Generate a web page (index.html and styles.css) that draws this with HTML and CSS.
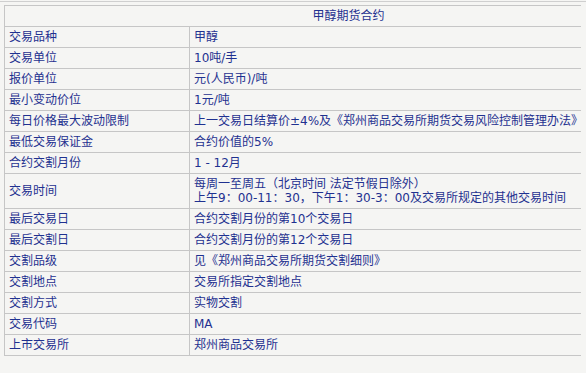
FILE: index.html
```html
<!DOCTYPE html>
<html lang="zh-CN">
<head>
<meta charset="utf-8">
<link rel="stylesheet" href="styles.css">
</head>
<body>
<div class="frame">
  <div class="clip">
    <table class="spec">
      <colgroup><col class="c1"><col class="c2"></colgroup>
      <tr class="head"><td colspan="2">甲醇期货合约</td></tr>
      <tr><td>交易品种</td><td>甲醇</td></tr>
      <tr><td>交易单位</td><td>10吨/手</td></tr>
      <tr><td>报价单位</td><td>元(人民币)/吨</td></tr>
      <tr><td>最小变动价位</td><td>1元/吨</td></tr>
      <tr><td>每日价格最大波动限制</td><td>上一交易日结算价±4%及《郑州商品交易所期货交易风险控制管理办法》相关规定</td></tr>
      <tr><td>最低交易保证金</td><td>合约价值的5%</td></tr>
      <tr><td>合约交割月份</td><td>1 - 12月</td></tr>
      <tr><td>交易时间</td><td>每周一至周五（北京时间 法定节假日除外）<br>上午9：00-11：30，下午1：30-3：00及交易所规定的其他交易时间</td></tr>
      <tr><td>最后交易日</td><td>合约交割月份的第10个交易日</td></tr>
      <tr><td>最后交割日</td><td>合约交割月份的第12个交易日</td></tr>
      <tr><td>交割品级</td><td>见《郑州商品交易所期货交割细则》</td></tr>
      <tr><td>交割地点</td><td>交易所指定交割地点</td></tr>
      <tr><td>交割方式</td><td>实物交割</td></tr>
      <tr><td>交易代码</td><td>MA</td></tr>
      <tr><td>上市交易所</td><td>郑州商品交易所</td></tr>
    </table>
  </div>
</div>
</body>
</html>
```
FILE: styles.css
```css
html, body {
  margin: 0;
  padding: 0;
  background: #f5f5f3;
}
body {
  font-family: "DejaVu Sans", "Noto Sans CJK SC", sans-serif;
  font-size: 12px;
  color: #1f3190;
}
.frame {
  margin-top: 1px;
  border-top: 1px solid #cfcfcf;
  padding: 3px 0 0 4px;
}
.clip {
  width: 577px;
  overflow: hidden;
}
.spec {
  border-collapse: collapse;
  white-space: nowrap;
  table-layout: fixed;
  width: 688px;
}
.spec .c1 {
  width: 185px;
}
.spec .c2 {
  width: 503px;
}
.spec td {
  border: 1px solid #c6c6c6;
  padding: 3px 4px;
  line-height: 14px;
  height: 14px;
  vertical-align: middle;
  overflow: hidden;
}
.spec .head td {
  text-align: center;
}
```
